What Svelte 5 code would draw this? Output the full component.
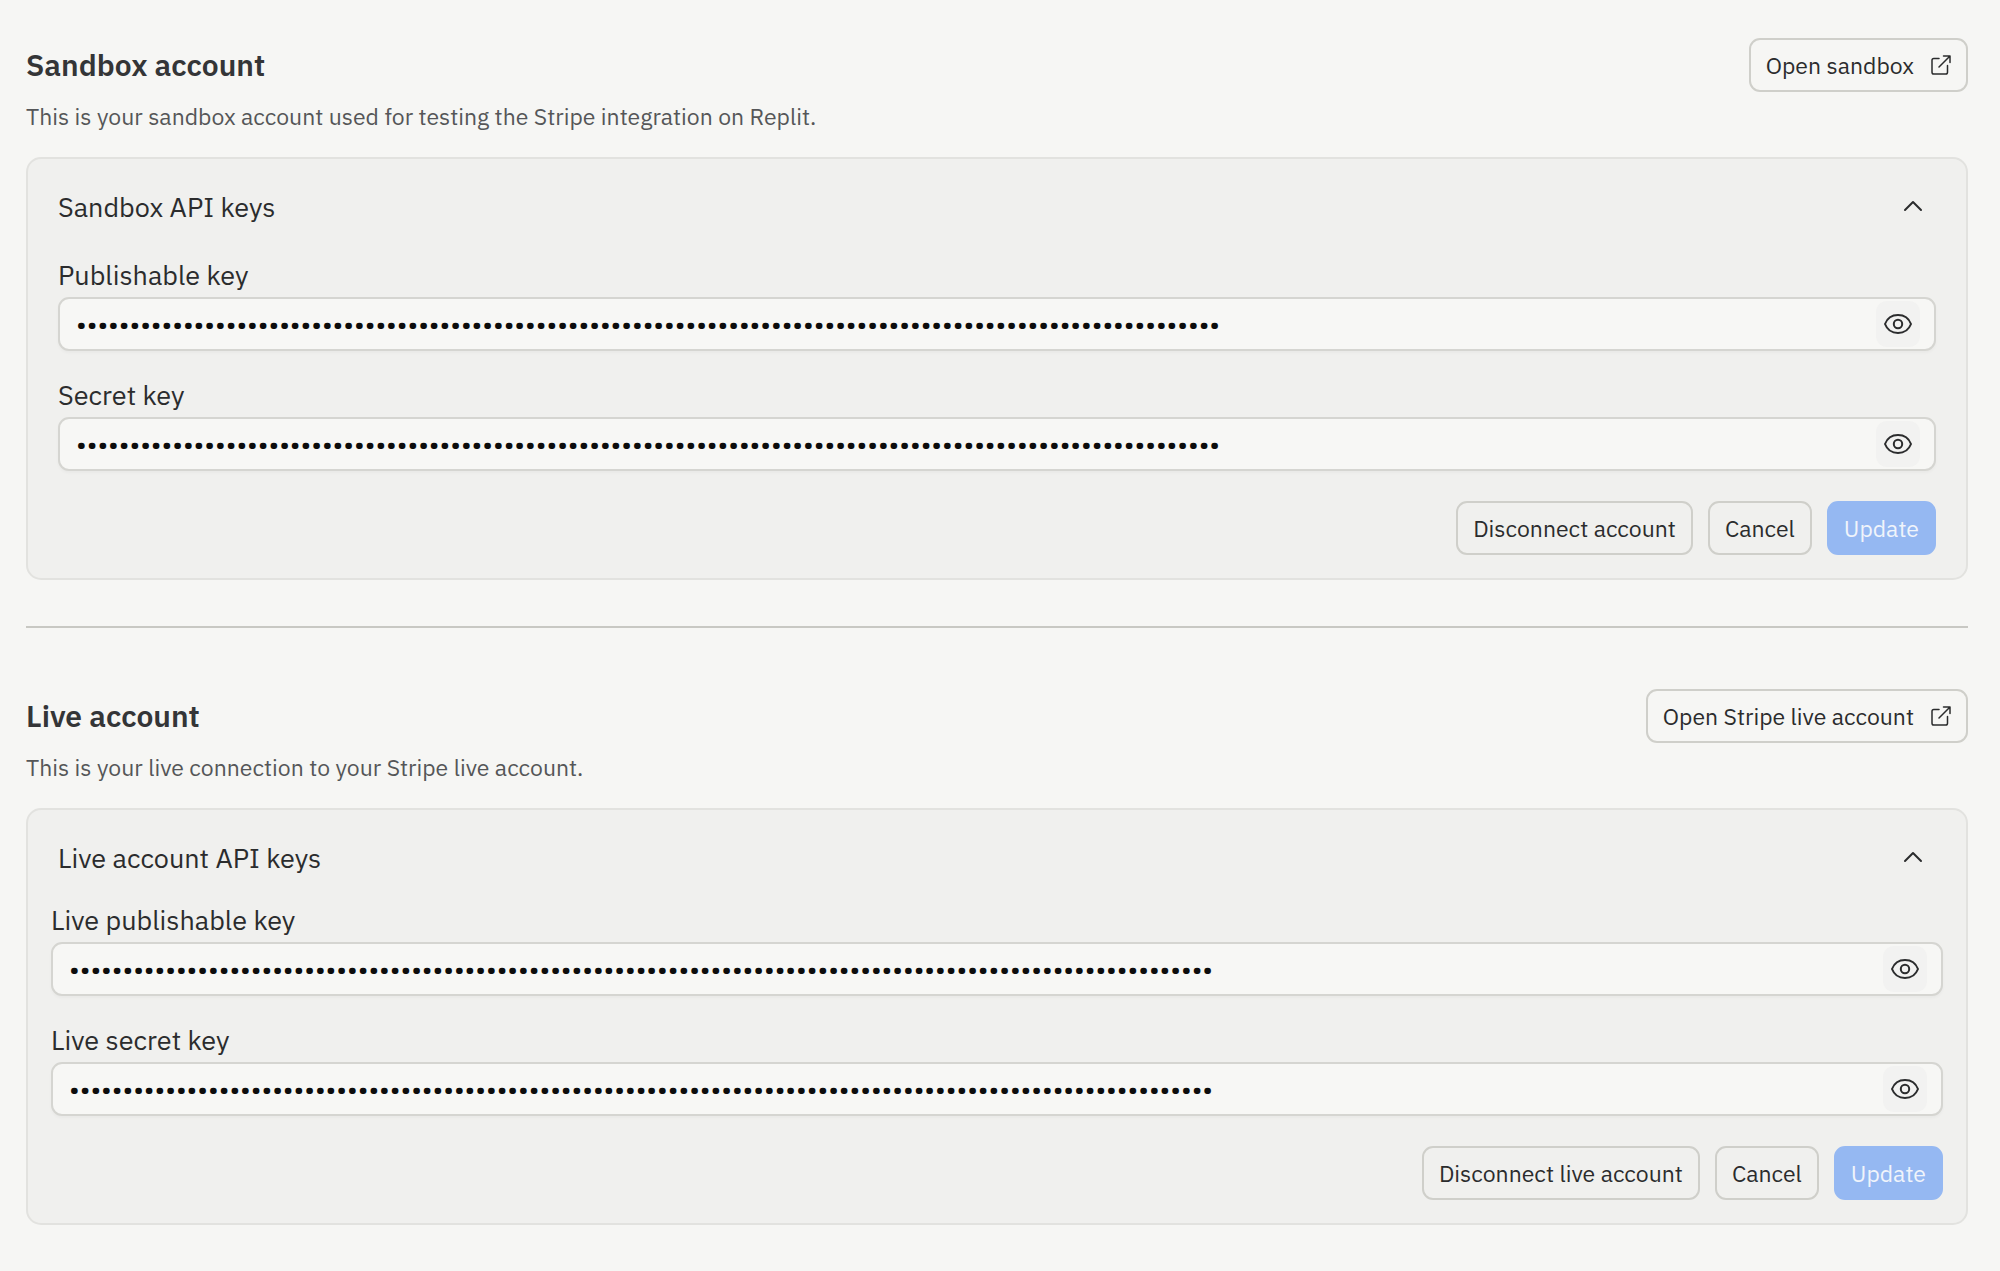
<script lang="ts">
  type KeyField = { id: string; label: string; value: string; visible: boolean }
  type Account = {
    id: string
    title: string
    description: string
    openLabel: string
    keysTitle: string
    disconnectLabel: string
    wide: boolean
    expanded: boolean
    fields: KeyField[]
  }

  const placeholderKey = 'x'.repeat(107)

  let accounts = $state<Account[]>([
    {
      id: 'sandbox',
      title: 'Sandbox account',
      description: 'This is your sandbox account used for testing the Stripe integration on Replit.',
      openLabel: 'Open sandbox',
      keysTitle: 'Sandbox API keys',
      disconnectLabel: 'Disconnect account',
      wide: false,
      expanded: true,
      fields: [
        { id: 'sandbox-publishable', label: 'Publishable key', value: placeholderKey, visible: false },
        { id: 'sandbox-secret', label: 'Secret key', value: placeholderKey, visible: false }
      ]
    },
    {
      id: 'live',
      title: 'Live account',
      description: 'This is your live connection to your Stripe live account.',
      openLabel: 'Open Stripe live account',
      keysTitle: 'Live account API keys',
      disconnectLabel: 'Disconnect live account',
      wide: true,
      expanded: true,
      fields: [
        { id: 'live-publishable', label: 'Live publishable key', value: placeholderKey, visible: false },
        { id: 'live-secret', label: 'Live secret key', value: placeholderKey, visible: false }
      ]
    }
  ])
</script>

<main class="page">
  {#each accounts as account (account.id)}
    <section class="account">
      <header class="account-header">
        <h2>{account.title}</h2>
        <a class="btn" href="#{account.id}">
          {account.openLabel}
          <svg class="icon-external" viewBox="0 0 20 20" aria-hidden="true">
            <path d="M8 3.500H2.800A1.800 1.800 0 0 0 1 5.300v11.900A1.800 1.800 0 0 0 2.800 19h11.900a1.800 1.800 0 0 0 1.800-1.800V10.500" />
            <path d="M12.500 1H19v6.500M19 1 8 12" />
          </svg>
        </a>
      </header>
      <p class="description">{account.description}</p>

      <div class="card">
        <button class="card-toggle" aria-expanded={account.expanded} onclick={() => (account.expanded = !account.expanded)}>
          <span>{account.keysTitle}</span>
          <svg class="icon-chevron" class:collapsed={!account.expanded} viewBox="0 0 46 44" aria-hidden="true">
            <path d="m15 25 8-8 8 8" />
          </svg>
        </button>

        {#if account.expanded}
          <form class="card-body" class:wide={account.wide} onsubmit={(e) => e.preventDefault()}>
            {#each account.fields as field (field.id)}
              <div class="field">
                <label for={field.id}>{field.label}</label>
                <div class="input-wrap">
                  <input id={field.id} type={field.visible ? 'text' : 'password'} autocomplete="off" bind:value={field.value} />
                  <button class="reveal" type="button" aria-label="Toggle {field.label}" onclick={() => (field.visible = !field.visible)}>
                    <svg class="icon-eye" viewBox="0 0 28 20" aria-hidden="true">
                      <path d="M1 10C3.200 4.200 8.200 1 14 1s10.800 3.200 13 9c-2.200 5.800-7.200 9-13 9S3.200 15.800 1 10Z" />
                      <circle cx="14" cy="10" r="4.200" />
                    </svg>
                  </button>
                </div>
              </div>
            {/each}

            <div class="actions">
              <button class="btn" type="button">{account.disconnectLabel}</button>
              <button class="btn" type="button">Cancel</button>
              <button class="btn primary" type="submit" disabled>Update</button>
            </div>
          </form>
        {/if}
      </div>
    </section>
  {/each}
</main>

<style>
  :global(body) {
    margin: 0;
    background: #f6f6f4;
  }

  .page {
    padding: 38px 32px 40px 26px;
    font-family: 'IBM Plex Sans', Roboto, sans-serif;
    color: #2b2c2d;
  }

  .account + .account {
    margin-top: 46px;
    padding-top: 61px;
    border-top: 2px solid #c8c8c3;
  }

  .account-header {
    display: flex;
    align-items: center;
    justify-content: space-between;
    gap: 16px;
  }

  h2 {
    margin: 0;
    font-size: 30px;
    line-height: 40px;
    font-weight: 600;
    color: #343537;
  }

  .description {
    margin: 8px 0 24px;
    font-size: 23px;
    line-height: 33px;
    color: #555658;
  }

  .btn {
    display: inline-flex;
    align-items: center;
    gap: 17px;
    box-sizing: border-box;
    height: 54px;
    padding: 0 15px;
    border: 2px solid #cfcfca;
    border-radius: 11px;
    background: transparent;
    color: inherit;
    font-family: inherit;
    font-size: 23px;
    line-height: 32px;
    text-decoration: none;
    white-space: nowrap;
    cursor: pointer;
  }

  .btn:hover {
    background: #ebebe8;
  }

  .btn.primary {
    border-color: #95b8f2;
    background: #95b8f2;
    color: #f0f4fb;
    cursor: default;
  }

  .card {
    border: 2px solid #e2e2df;
    border-radius: 15px;
    background: #f0f0ee;
  }

  .card-toggle {
    display: flex;
    align-items: center;
    justify-content: space-between;
    width: 100%;
    padding: 26px 30px 22px;
    border: none;
    background: none;
    color: inherit;
    font-family: inherit;
    font-size: 27px;
    line-height: 44px;
    text-align: left;
    cursor: pointer;
  }

  .card-body {
    padding: 6px 30px 23px;
  }

  .card-body.wide {
    padding: 0 23px 23px;
  }

  .field {
    margin-bottom: 26px;
  }

  .field label {
    display: block;
    padding-bottom: 4px;
    font-size: 27px;
    line-height: 36px;
  }

  .input-wrap {
    display: flex;
    align-items: center;
    box-sizing: border-box;
    height: 54px;
    padding: 0 14px 0 16px;
    border: 2px solid #d5d5d1;
    border-radius: 11px;
    background: #f7f7f5;
    box-shadow: 0 2px 3px rgba(0, 0, 0, 0.03);
  }

  .input-wrap:focus-within {
    border-color: #95b8f2;
  }

  .input-wrap input {
    flex: 1;
    min-width: 0;
    padding: 0;
    border: none;
    outline: none;
    background: none;
    color: #0c0c0c;
    font-family: inherit;
    font-size: 27px;
    line-height: 36px;
  }

  .reveal {
    display: flex;
    align-items: center;
    justify-content: center;
    width: 44px;
    height: 46px;
    padding: 0;
    border: none;
    border-radius: 11px;
    background: #f2f2f1;
    color: inherit;
    cursor: pointer;
  }

  .actions {
    display: flex;
    justify-content: flex-end;
    gap: 15px;
    padding-top: 4px;
  }

  svg {
    flex: none;
    fill: none;
    stroke: currentColor;
    stroke-linecap: round;
    stroke-linejoin: round;
  }

  .icon-external {
    width: 20px;
    height: 20px;
    stroke-width: 1.5;
  }

  .icon-chevron {
    width: 46px;
    height: 44px;
    stroke-width: 2;
  }

  .icon-chevron.collapsed {
    transform: rotate(180deg);
  }

  .icon-eye {
    width: 28px;
    height: 20px;
    stroke-width: 2;
  }
</style>
